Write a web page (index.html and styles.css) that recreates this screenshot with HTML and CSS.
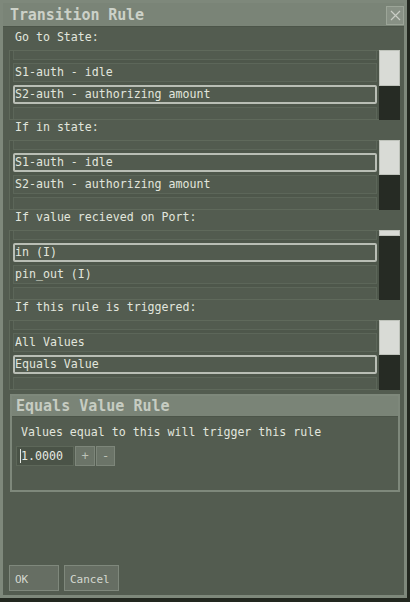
FILE: index.html
```html
<!DOCTYPE html>
<html lang="en">
<head>
  <meta charset="UTF-8">
  <title>Transition Rule</title>
  <link rel="stylesheet" href="styles.css">
</head>
<body>
  <div class="window">
    <div class="titlebar">
      <span class="title">Transition Rule</span>
      <button class="close" aria-label="close">
        <svg width="11" height="11" viewBox="0 0 11 11"><path d="M1 1L10 10M10 1L1 10" stroke="#c9cdc5" stroke-width="1.2" fill="none"/></svg>
      </button>
    </div>
    <div class="body">
      <div class="label">Go to State:</div>
      <div class="list">
        <div class="items">
          <div class="inner">
            <div class="row"></div>
            <div class="row">S1-auth - idle</div>
            <div class="row sel">S2-auth - authorizing amount</div>
            <div class="row"></div>
          </div>
        </div>
        <div class="scroll"><div class="thumb" style="height:36px"></div></div>
      </div>

      <div class="label">If in state:</div>
      <div class="list">
        <div class="items">
          <div class="inner">
            <div class="row"></div>
            <div class="row sel">S1-auth - idle</div>
            <div class="row">S2-auth - authorizing amount</div>
            <div class="row"></div>
          </div>
        </div>
        <div class="scroll"><div class="thumb" style="height:35px"></div></div>
      </div>

      <div class="label">If value recieved on Port:</div>
      <div class="list">
        <div class="items">
          <div class="inner">
            <div class="row"></div>
            <div class="row sel">in (I)</div>
            <div class="row">pin_out (I)</div>
            <div class="row"></div>
          </div>
        </div>
        <div class="scroll"><div class="thumb" style="height:6px"></div></div>
      </div>

      <div class="label">If this rule is triggered:</div>
      <div class="list">
        <div class="items">
          <div class="inner">
            <div class="row"></div>
            <div class="row">All Values</div>
            <div class="row sel">Equals Value</div>
            <div class="row"></div>
          </div>
        </div>
        <div class="scroll"><div class="thumb" style="height:35px"></div></div>
      </div>

      <div class="panel">
        <div class="ptitle">Equals Value Rule</div>
        <div class="pbody">
          <div class="ptext">Values equal to this will trigger this rule</div>
          <div class="spin">
            <div class="field"><span class="caret"></span>1.0000</div>
            <button class="step">+</button>
            <button class="step">-</button>
          </div>
        </div>
      </div>

      <div class="actions">
        <button class="btn ok">OK</button>
        <button class="btn cancel">Cancel</button>
      </div>
    </div>
  </div>
</body>
</html>
```

FILE: styles.css
```css
:root{--bg:#535c50;--frame:#7e887b;--bar:#7a8477;--list:#4e574b;--row:#525b4f;--rowline:#5c6659;--sel:#b9beb5;--text:#e2e6de;--mono:"DejaVu Sans Mono","Liberation Mono",monospace}
html,body{margin:0;padding:0}
body{background:#22271f;font-family:var(--mono);color:var(--text);font-size:11.6px}
button{font-family:var(--mono);cursor:pointer;margin:0}
.window{width:407px;height:598px;box-sizing:border-box;border:3px solid var(--frame);background:var(--bg);display:flex;flex-direction:column}
.titlebar{height:23px;flex:none;background:var(--bar);display:flex;align-items:center;justify-content:space-between;padding:0 0 0 7px;border-bottom:1px solid #4c5549}
.title{font-size:15px;font-weight:bold;color:#ccd1c8;letter-spacing:-.1px}
.close{width:18px;height:19px;padding:0;display:flex;align-items:center;justify-content:center;background:#889185;border:1px solid #9ca598;margin-top:1px}
.body{flex:1;display:flex;flex-direction:column;padding:3px 0 4px 6px}
.label{height:20px;line-height:14px;padding-left:6px;white-space:nowrap}
.list{width:391px;height:70px;box-sizing:border-box;display:flex;border:1px solid #5f695b;border-right:0;background:var(--list)}
.items{flex:1;overflow:hidden;padding:0 2px 0 3px}
.inner{margin-top:-10px;display:flex;flex-direction:column;gap:3px}
.row{height:19px;box-sizing:border-box;border:1px solid var(--rowline);background:var(--row);line-height:17px;padding-left:1px;white-space:nowrap}
.row.sel{border:2px solid var(--sel);border-radius:2px;line-height:15px;padding-left:0}
.scroll{width:21px;flex:none;background:#262b24;margin-top:-1px;margin-bottom:-1px}
.thumb{background:#d9dbd6;border:1px solid #bfc3bb;box-sizing:border-box}
.panel{width:390px;height:98px;box-sizing:border-box;margin:4px 0 0 1px;border:2px solid var(--frame);display:flex;flex-direction:column}
.ptitle{height:20px;flex:none;background:var(--bar);font-size:15px;font-weight:bold;color:#c6ccc2;line-height:20px;padding-left:4px;border-bottom:1px solid #4c5549}
.pbody{flex:1;padding:8px 0 0 9px}
.ptext{line-height:14px;white-space:nowrap}
.spin{display:flex;margin:7px 0 0 -5px;gap:1px}
.field{width:58px;height:20px;box-sizing:border-box;background:#4a5347;border:1px solid #5d6759;line-height:18px;padding-left:3px;display:flex;align-items:center;color:#e6e9e2}
.caret{width:1px;height:14px;background:#e6e9e2;margin-right:0}
.step{width:20px;height:20px;padding:0;background:#6b7468;border:1px solid #7d867a;color:#bcc2b8;font-size:12px;line-height:18px}
.step+.step{width:19px}
.actions{margin-top:auto;display:flex;gap:5px}
.btn{height:26px;box-sizing:border-box;background:#666e63;border:1px solid #7f887c;color:#d4d8d0;font-size:11px;text-align:left;padding:3px 0 0 5px}
.ok{width:50px}
.cancel{width:55px}
```
